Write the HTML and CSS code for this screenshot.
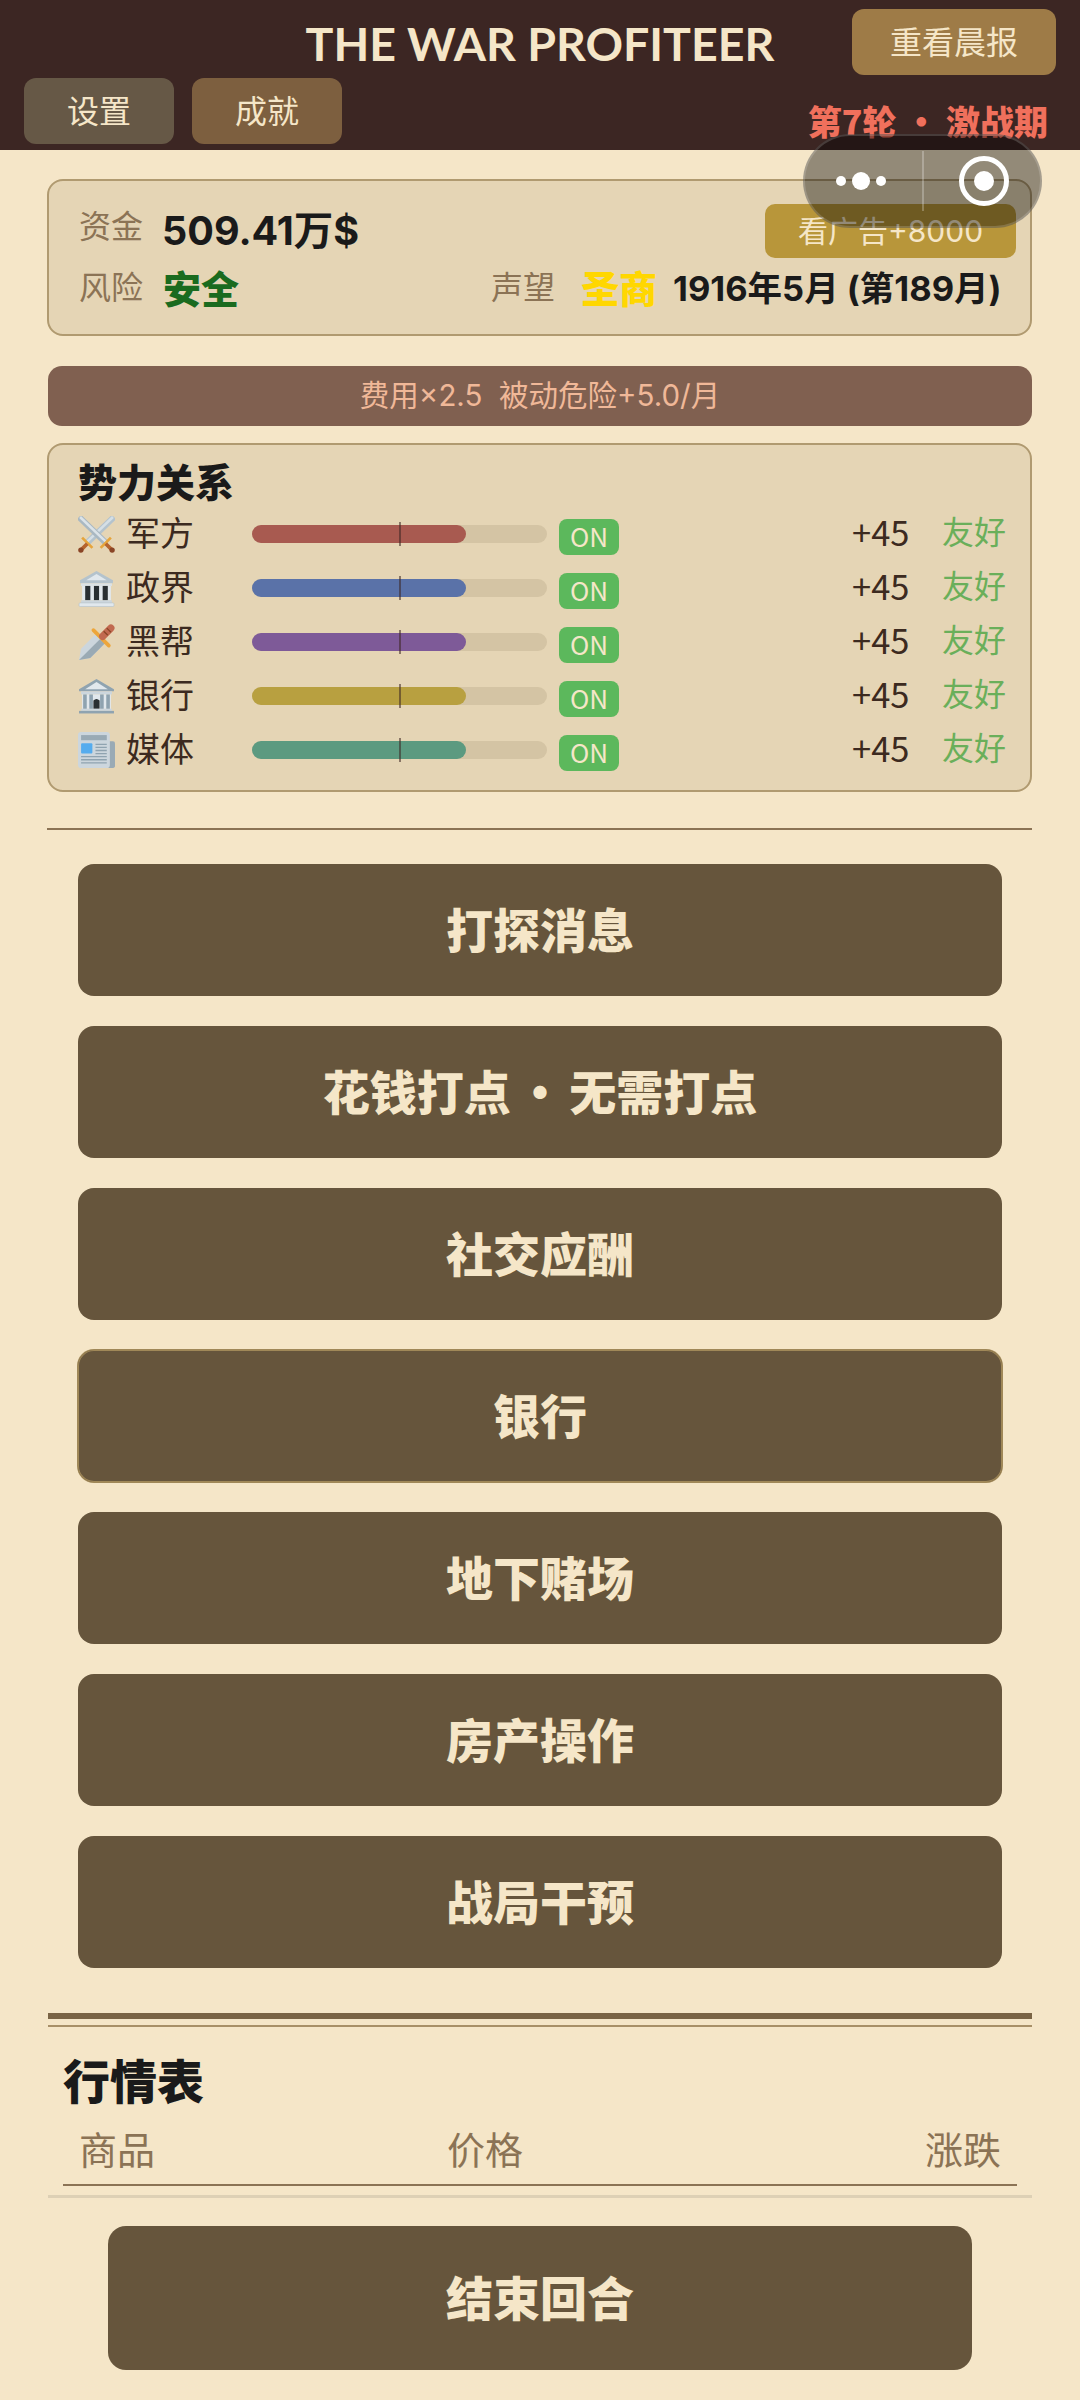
FILE: index.html
```html
<!DOCTYPE html>
<html lang="zh-CN">
<head>
<meta charset="UTF-8">
<meta name="viewport" content="width=device-width, initial-scale=1.0">
<title>The War Profiteer</title>
<link rel="stylesheet" href="styles.css">
</head>
<body>
<div id="app">
  <header class="top">
    <div class="top-row">
      <span></span>
      <h1 class="game-title">THE WAR PROFITEER</h1>
      <div class="btn-report">重看晨报</div>
    </div>
    <div class="top-row2">
      <div class="btn-small btn-settings">设置</div>
      <div class="btn-small btn-awards">成就</div>
      <div class="phase">第7轮 · 激战期</div>
    </div>
  </header>

  <!-- WeChat mini program capsule, lies over the page -->
  <div class="capsule">
    <div class="capsule-dots"><i></i><b></b><i></i></div>
    <div class="capsule-line"></div>
    <div class="capsule-ring"><b></b></div>
  </div>

  <section class="card info-card">
    <div class="info-row">
      <span class="label">资金</span>
      <span class="money">509.41万$</span>
      <div class="btn-ad">看广告+8000</div>
    </div>
    <div class="info-row info-row2">
      <span class="label">风险</span>
      <span class="risk">安全</span>
      <span class="label rep-label">声望</span>
      <span class="rep">圣商</span>
      <span class="date">1916年5月 (第189月)</span>
    </div>
  </section>

  <div class="banner">费用×2.5&nbsp;&nbsp;被动危险+5.0/月</div>

  <section class="card rel-card">
    <h2 class="rel-title">势力关系</h2>

    <div class="rel-row">
      <svg class="rel-icon" viewBox="0 0 36 36">
        <path d="M35 1 L9 26" stroke="#b4c3cd" stroke-width="6"/>
        <path d="M34 1 L9 25" stroke="#d5dfe5" stroke-width="2.5"/>
        <path d="M1 1 L27 26" stroke="#a9b8c2" stroke-width="6"/>
        <path d="M2 1 L27 25" stroke="#dbe3e8" stroke-width="2.5"/>
        <path d="M4 21 L14 31 M32 21 L22 31" stroke="#e6a53c" stroke-width="2.6" fill="none"/>
        <path d="M9 27 L3 33 M27 27 L33 33" stroke="#b5642f" stroke-width="3.6" fill="none"/>
        <circle cx="2.8" cy="33.2" r="2.6" fill="#8a4526"/>
        <circle cx="33.2" cy="33.2" r="2.6" fill="#8a4526"/>
      </svg>
      <span class="rel-name">军方</span>
      <div class="bar"><div class="fill c-army" style="width: 72.5%"></div><div class="mid"></div></div>
      <span class="on">ON</span>
      <span class="score">+45</span>
      <span class="mood">友好</span>
    </div>

    <div class="rel-row">
      <svg class="rel-icon" viewBox="0 0 36 36">
        <path d="M18 1 L34 10 L34 13 L2 13 L2 10 Z" fill="#b4c3cd"/>
        <path d="M18 4 L28 10 L8 10 Z" fill="#e1e8ed"/>
        <rect x="3" y="13" width="30" height="2.5" fill="#dbe3e8"/>
        <rect x="4" y="15.5" width="28" height="14" fill="#e1e8ed"/>
        <rect x="7" y="15.5" width="5" height="14" fill="#292f33"/>
        <rect x="15.5" y="15.5" width="5" height="14" fill="#292f33"/>
        <rect x="24" y="15.5" width="5" height="14" fill="#292f33"/>
        <rect x="3" y="29.5" width="30" height="2.5" fill="#ccd6dd"/>
        <rect x="1" y="32" width="34" height="3.5" rx="1" fill="#e1e8ed" stroke="#b4c3cd" stroke-width=".6"/>
      </svg>
      <span class="rel-name">政界</span>
      <div class="bar"><div class="fill c-gov" style="width: 72.5%"></div><div class="mid"></div></div>
      <span class="on">ON</span>
      <span class="score">+45</span>
      <span class="mood">友好</span>
    </div>

    <div class="rel-row">
      <svg class="rel-icon" viewBox="0 0 36 36">
        <path d="M1 35 L3 24 L18 9 L27 18 L12 33 Z" fill="#ccd6dd"/>
        <path d="M1 35 L22.500 13.500 L27 18 L12 33 Z" fill="#9aaab4"/>
        <path d="M15 6 L30 21" stroke="#eda63b" stroke-width="3.6" stroke-linecap="round"/>
        <path d="M24 12 L32 4" stroke="#c1694f" stroke-width="7" stroke-linecap="round"/>
        <path d="M25 7 L29 11 M28 4 L32 8" stroke="#8a4526" stroke-width="1.2"/>
      </svg>
      <span class="rel-name">黑帮</span>
      <div class="bar"><div class="fill c-gang" style="width: 72.5%"></div><div class="mid"></div></div>
      <span class="on">ON</span>
      <span class="score">+45</span>
      <span class="mood">友好</span>
    </div>

    <div class="rel-row">
      <svg class="rel-icon" viewBox="0 0 36 36">
        <path d="M18 1 L35 11 L35 13 L1 13 L1 11 Z" fill="#8fa3b0"/>
        <path d="M18 4 L29 11 L7 11 Z" fill="#e1e8ed"/>
        <rect x="3" y="13" width="30" height="3" fill="#ccd6dd"/>
        <rect x="4" y="16" width="28" height="14" fill="#e1e8ed"/>
        <rect x="5" y="16" width="3.5" height="14" fill="#8fa3b0"/>
        <rect x="11" y="16" width="3.5" height="14" fill="#8fa3b0"/>
        <rect x="21.5" y="16" width="3.5" height="14" fill="#8fa3b0"/>
        <rect x="27.500" y="16" width="3.5" height="14" fill="#8fa3b0"/>
        <path d="M15 30 L15 22 Q18 19 21 22 L21 30 Z" fill="#292f33"/>
        <rect x="3" y="30" width="30" height="2" fill="#ccd6dd"/>
        <rect x="1" y="32" width="34" height="2.5" fill="#8fa3b0"/>
      </svg>
      <span class="rel-name">银行</span>
      <div class="bar"><div class="fill c-bank" style="width: 72.5%"></div><div class="mid"></div></div>
      <span class="on">ON</span>
      <span class="score">+45</span>
      <span class="mood">友好</span>
    </div>

    <div class="rel-row">
      <svg class="rel-icon" viewBox="0 0 36 36">
        <path d="M28 9 L34 9 Q36 9 36 11 L36 33 Q36 35 33 35 L28 35 Z" fill="#99aab5"/>
        <rect x="0" y="0" width="31" height="35" rx="3" fill="#ccd6dd"/>
        <rect x="3" y="3" width="25" height="5" fill="#99aab5"/>
        <rect x="3" y="11" width="11" height="10" rx="1" fill="#55acee"/>
        <path d="M17 12 H28 M17 15 H28 M17 18 H28 M17 21 H28 M3 24 H28 M3 27 H28 M3 30 H28" stroke="#8fa3b0" stroke-width="1.3"/>
      </svg>
      <span class="rel-name">媒体</span>
      <div class="bar"><div class="fill c-media" style="width: 72.5%"></div><div class="mid"></div></div>
      <span class="on">ON</span>
      <span class="score">+45</span>
      <span class="mood">友好</span>
    </div>
  </section>

  <div class="divider"></div>

  <nav class="actions">
    <div class="action">打探消息</div>
    <div class="action">花钱打点 · 无需打点</div>
    <div class="action">社交应酬</div>
    <div class="action action-on">银行</div>
    <div class="action">地下赌场</div>
    <div class="action">房产操作</div>
    <div class="action">战局干预</div>
  </nav>

  <div class="rule-thick"></div>
  <div class="rule-thin"></div>

  <section class="market">
    <h2 class="market-title">行情表</h2>
    <div class="market-head">
      <span class="mh-name">商品</span>
      <span class="mh-price">价格</span>
      <span class="mh-change">涨跌</span>
    </div>
  </section>
  <div class="rule-pale"></div>

  <div class="btn-end">结束回合</div>
</div>
</body>
</html>
```

FILE: styles.css
```css
html, body {
  margin: 0;
  padding: 0;
  background-color: #f5e6c8;
  font-family: "Noto Sans CJK SC", sans-serif;
  color: #3c2a20;
}

#app {
  position: relative;
  width: 1080px;
  height: 2400px;
  overflow: hidden;
}

/* header */
.top {
  box-sizing: border-box;
  height: 150px;
  padding: 9px 24px 0;
  background-color: #3c2623;
}

.top-row {
  display: grid;
  grid-template-columns: 1fr auto 1fr;
  align-items: center;
  height: 66px;
}

.game-title {
  margin: 0;
  padding-top: 2px;
  font-family: Lato, "Noto Sans CJK SC", sans-serif;
  font-size: 46.5px;
  font-weight: 700;
  line-height: 64px;
  color: #f5e6c8;
}

.btn-report {
  justify-self: end;
  width: 204px;
  height: 66px;
  line-height: 63px;
  text-align: center;
  border-radius: 12px;
  font-size: 32px;
  color: #f5e6c8;
  background-color: #9e7b47;
}

.top-row2 {
  display: flex;
  gap: 18px;
  height: 66px;
  margin-top: 3px;
}

.btn-small {
  width: 150px;
  height: 66px;
  line-height: 63px;
  text-align: center;
  border-radius: 12px;
  font-size: 32px;
  color: #f5e6c8;
}

.btn-settings { background-color: #665846; }
.btn-awards { background-color: #7d5f3f; }

.phase {
  margin-left: auto;
  margin-right: 8px;
  padding-top: 21px;
  font-size: 34px;
  font-weight: 900;
  line-height: 44px;
  color: #f0705c;
}

/* capsule */
.capsule {
  position: absolute;
  left: 803px;
  top: 134px;
  box-sizing: border-box;
  display: flex;
  align-items: center;
  width: 239px;
  height: 94px;
  border: 2px solid rgba(255, 255, 255, 0.16);
  border-radius: 47px;
  background-color: rgba(0, 0, 0, 0.4);
}

.capsule-dots {
  display: flex;
  align-items: center;
  justify-content: center;
  gap: 6px;
  width: 112px;
  margin-right: 5px;
}

.capsule-dots i {
  width: 10px;
  height: 10px;
  border-radius: 50%;
  background-color: white;
}

.capsule-dots b {
  width: 18px;
  height: 18px;
  border-radius: 50%;
  background-color: white;
}

.capsule-line {
  width: 2px;
  height: 60px;
  background-color: rgba(255, 255, 255, 0.25);
}

.capsule-ring {
  box-sizing: border-box;
  display: flex;
  align-items: center;
  justify-content: center;
  width: 50px;
  height: 50px;
  margin-left: 35px;
  border: 5px solid white;
  border-radius: 50%;
}

.capsule-ring b {
  width: 20px;
  height: 20px;
  border-radius: 50%;
  background-color: white;
}

/* cards */
.card {
  box-sizing: border-box;
  width: 985px;
  margin-left: 47px;
  border: 2px solid #b09a70;
  border-radius: 16px;
  background-color: #e5d5b5;
}

.info-card {
  height: 157px;
  margin-top: 29px;
  padding: 23px 14px 0 30px;
}

.info-row {
  display: flex;
  align-items: center;
  height: 54px;
}

.info-row .label {
  margin-bottom: 14px;
}

.info-row .money {
  margin-bottom: 8px;
}

.info-row2 {
  margin-top: 1px;
}

.info-row2 .label {
  margin-bottom: 2px;
}

.label {
  font-size: 32px;
  color: #8b7355;
}

.money {
  margin-left: 19px;
  font-family: Inter, "Noto Sans CJK SC", sans-serif;
  font-size: 39.5px;
  font-weight: 700;
  color: #1a1a1a;
}

.btn-ad {
  width: 251px;
  height: 54px;
  margin-left: auto;
  line-height: 54px;
  text-align: center;
  border-radius: 10px;
  font-family: Inter, "Noto Sans CJK SC", sans-serif;
  font-size: 30px;
  color: #f5e6c8;
  background-color: #b8963a;
}

.risk {
  margin-left: 20px;
  font-size: 38px;
  font-weight: 900;
  color: #1a6b1f;
}

.rep-label {
  margin-left: 252px;
}

.rep {
  margin-left: 26px;
  font-size: 38px;
  font-weight: 900;
  color: #ffd700;
}

.date {
  margin-left: 16px;
  font-family: Inter, "Noto Sans CJK SC", sans-serif;
  font-size: 34.5px;
  font-weight: 700;
  color: #1a1a1a;
}

.banner {
  width: 984px;
  height: 60px;
  margin: 30px 0 0 48px;
  line-height: 58px;
  text-align: center;
  border-radius: 14px;
  font-family: Inter, "Noto Sans CJK SC", sans-serif;
  font-size: 29.5px;
  color: #f0b898;
  background-color: #806050;
}

.rel-card {
  height: 349px;
  margin-top: 17px;
  padding: 11px 24px 0 29px;
}

.rel-title {
  margin: 0;
  height: 54px;
  font-size: 39px;
  font-weight: 900;
  line-height: 48px;
  color: #1a1a1a;
}

.rel-row {
  display: flex;
  align-items: center;
  height: 54px;
}

.rel-icon {
  flex: none;
  width: 37px;
  height: 37px;
  margin-bottom: 6px;
}

.rel-name {
  width: 68px;
  margin-left: 11px;
  margin-bottom: 10px;
  font-size: 34px;
  line-height: 44px;
  color: #3c2a20;
}

.bar {
  position: relative;
  width: 295px;
  height: 18px;
  margin-left: 58px;
  margin-bottom: 6px;
  border-radius: 9px;
  background-color: #d4c4a4;
}

.fill {
  height: 18px;
  border-radius: 9px;
}

.c-army { background-color: #a85a50; }
.c-gov { background-color: #5a72a8; }
.c-gang { background-color: #7e5a98; }
.c-bank { background-color: #b8a040; }
.c-media { background-color: #5c9a80; }

.mid {
  position: absolute;
  left: 147px;
  top: -3px;
  width: 2px;
  height: 24px;
  background-color: rgba(60, 38, 35, 0.55);
}

.on {
  width: 60px;
  height: 36px;
  margin-left: 12px;
  line-height: 34px;
  text-align: center;
  border-radius: 8px;
  font-size: 26px;
  color: #f5e6c8;
  background-color: #5cb85c;
}

.score {
  width: 60px;
  margin-left: auto;
  margin-bottom: 13px;
  font-size: 34.5px;
  line-height: 44px;
  color: #3c2a20;
}

.mood {
  margin-left: 30px;
  margin-bottom: 14px;
  font-size: 32px;
  line-height: 44px;
  color: #6aaf5a;
}

.divider {
  width: 985px;
  height: 2px;
  margin: 36px 0 0 47px;
  background-color: #8b7355;
}

/* action buttons */
.actions {
  display: flex;
  flex-direction: column;
  gap: 30px;
  margin: 34px 78px 0;
}

.action {
  height: 132px;
  line-height: 127px;
  text-align: center;
  border-radius: 16px;
  font-size: 47px;
  font-weight: 900;
  word-spacing: -5px;
  color: #f5e6c8;
  background-color: #66553c;
}

.action-on {
  box-shadow: 0 0 0 1px #a08858, inset 0 0 0 1px #a08858;
}

.rule-thick {
  width: 984px;
  height: 6px;
  margin: 45px 0 0 48px;
  background-color: #7a6445;
}

.rule-thin {
  width: 984px;
  height: 2px;
  margin: 6px 0 0 48px;
  background-color: #a89068;
}

/* market table */
.market {
  margin: 0 63px;
  height: 157px;
  border-bottom: 2px solid #8b7355;
}

.market-title {
  margin: 0;
  padding-top: 20px;
  font-size: 47px;
  font-weight: 900;
  line-height: 64px;
  color: #1a1a1a;
}

.market-head {
  display: flex;
  margin-top: 12px;
  padding: 0 16px;
  font-size: 38px;
  line-height: 50px;
  color: #8b7355;
}

.mh-name { width: 368px; }
.mh-price { flex: 1; }

.rule-pale {
  width: 984px;
  height: 3px;
  margin: 9px 0 0 48px;
  background-color: #ddd0b5;
}

.btn-end {
  width: 864px;
  height: 144px;
  margin: 28px 0 0 108px;
  line-height: 139px;
  text-align: center;
  border-radius: 18px;
  font-size: 47px;
  font-weight: 900;
  color: #f5e6c8;
  background-color: #66553c;
}
```
